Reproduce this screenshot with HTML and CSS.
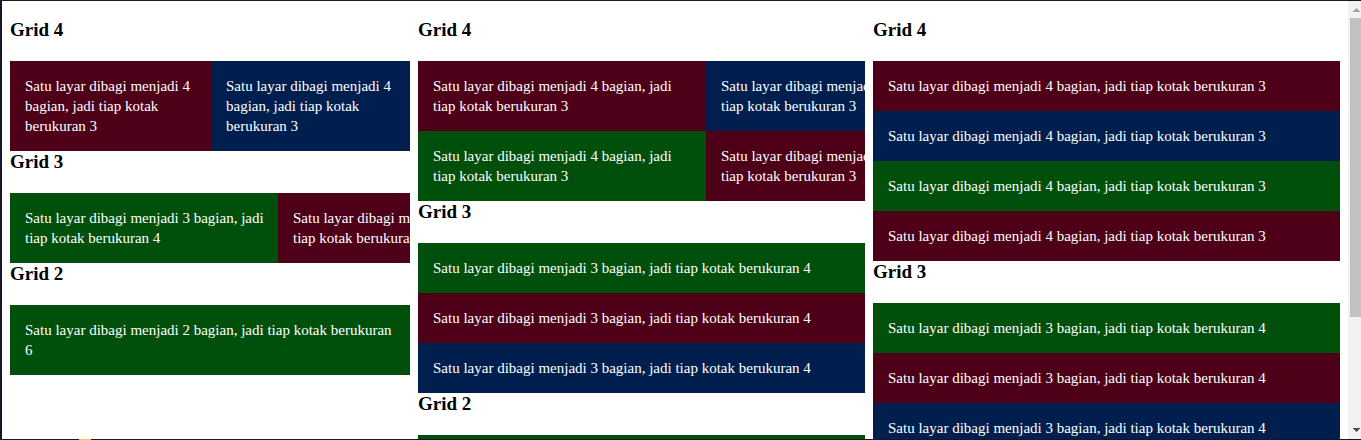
FILE: index.html
```html
<!DOCTYPE html>
<html lang="id">
<head>
<meta charset="utf-8">
<title>Grid</title>
<link rel="stylesheet" href="styles.css">
</head>
<body>
<div class="window">
  <main class="columns">
    <div class="column">
      <section>
        <h3>Grid 4</h3>
        <div class="row row-even">
          <p class="tile red">Satu layar dibagi menjadi 4 bagian, jadi tiap kotak berukuran 3</p>
          <p class="tile blue">Satu layar dibagi menjadi 4 bagian, jadi tiap kotak berukuran 3</p>
        </div>
      </section>
      <section>
        <h3>Grid 3</h3>
        <div class="row row-medium">
          <p class="tile green">Satu layar dibagi menjadi 3 bagian, jadi tiap kotak berukuran 4</p>
          <p class="tile red">Satu layar dibagi menjadi 3 bagian, jadi tiap kotak berukuran 4</p>
        </div>
      </section>
      <section>
        <h3>Grid 2</h3>
        <p class="tile green">Satu layar dibagi menjadi 2 bagian, jadi tiap kotak berukuran 6</p>
      </section>
    </div>
    <div class="column">
      <section>
        <h3>Grid 4</h3>
        <div class="row row-wide">
          <p class="tile red">Satu layar dibagi menjadi 4 bagian, jadi tiap kotak berukuran 3</p>
          <p class="tile blue">Satu layar dibagi menjadi 4 bagian, jadi tiap kotak berukuran 3</p>
          <p class="tile green">Satu layar dibagi menjadi 4 bagian, jadi tiap kotak berukuran 3</p>
          <p class="tile red">Satu layar dibagi menjadi 4 bagian, jadi tiap kotak berukuran 3</p>
        </div>
      </section>
      <section>
        <h3>Grid 3</h3>
        <p class="tile green">Satu layar dibagi menjadi 3 bagian, jadi tiap kotak berukuran 4</p>
        <p class="tile red">Satu layar dibagi menjadi 3 bagian, jadi tiap kotak berukuran 4</p>
        <p class="tile blue">Satu layar dibagi menjadi 3 bagian, jadi tiap kotak berukuran 4</p>
      </section>
      <section>
        <h3>Grid 2</h3>
        <p class="tile green"></p>
      </section>
    </div>
    <div class="column">
      <section>
        <h3>Grid 4</h3>
        <p class="tile red">Satu layar dibagi menjadi 4 bagian, jadi tiap kotak berukuran 3</p>
        <p class="tile blue">Satu layar dibagi menjadi 4 bagian, jadi tiap kotak berukuran 3</p>
        <p class="tile green">Satu layar dibagi menjadi 4 bagian, jadi tiap kotak berukuran 3</p>
        <p class="tile red">Satu layar dibagi menjadi 4 bagian, jadi tiap kotak berukuran 3</p>
      </section>
      <section>
        <h3>Grid 3</h3>
        <p class="tile green">Satu layar dibagi menjadi 3 bagian, jadi tiap kotak berukuran 4</p>
        <p class="tile red">Satu layar dibagi menjadi 3 bagian, jadi tiap kotak berukuran 4</p>
        <p class="tile blue">Satu layar dibagi menjadi 3 bagian, jadi tiap kotak berukuran 4</p>
      </section>
    </div>
  </main>
  <div class="scrollbar" aria-hidden="true">
    <svg class="arrow" viewBox="0 0 11 17" shape-rendering="crispEdges"><path fill="#a3a3a3" d="M6 7h1v1h1v1h1v1h1v1H3v-1h1V9h1V8h1z"/></svg>
    <div class="track"><div class="thumb"></div></div>
    <svg class="arrow" viewBox="0 0 11 17" shape-rendering="crispEdges"><path fill="#505050" d="M3 6h7v1H9v1H8v1H7v1H6V9H5V8H4V7H3z"/></svg>
  </div>
</div>
</body>
</html>
```
FILE: styles.css
```css
* {
  box-sizing: border-box;
}

body {
  margin: 0;
  background: #16152a linear-gradient(#f0c75e, #f0c75e) no-repeat 79px 100% / 12px 1px;
  color: #000;
  font-family: "Liberation Serif", "Times New Roman", serif;
  font-size: 15px;
  line-height: 20px;
}

.window {
  display: flex;
  height: 100vh;
  padding: 1px 0 1px 2px;
}

.columns {
  flex: 1;
  min-width: 0;
  display: grid;
  grid-template-columns: minmax(0, 400fr) minmax(0, 447fr) minmax(0, 467fr);
  gap: 8px;
  padding: 18px 8px 0;
  background: #fff;
  overflow: hidden;
}

.column {
  min-height: 0;
}

h3 {
  margin: 0 0 20px;
  font-size: 19px;
  line-height: 22px;
}

.row {
  display: grid;
  overflow: hidden;
}

.row-even {
  grid-template-columns: 201px 1fr;
}

.row-medium {
  grid-template-columns: 268px 268px;
}

.row-wide {
  grid-template-columns: 288px 288px;
}

.tile {
  margin: 0;
  min-height: 50px;
  padding: 15px;
  color: #fff;
}

.row .tile {
  padding-right: 12px;
}

.red {
  background: #4d0018;
}

.blue {
  background: #001f4f;
}

.green {
  background: #00500b;
}

.scrollbar {
  display: flex;
  flex-direction: column;
  width: 13px;
  padding-left: 2px;
  background: #f1f1f1;
}

.arrow {
  flex: none;
  display: block;
  width: 11px;
  height: 17px;
}

.track {
  flex: 1;
}

.thumb {
  height: 74%;
  background: #c1c1c1;
}
```
